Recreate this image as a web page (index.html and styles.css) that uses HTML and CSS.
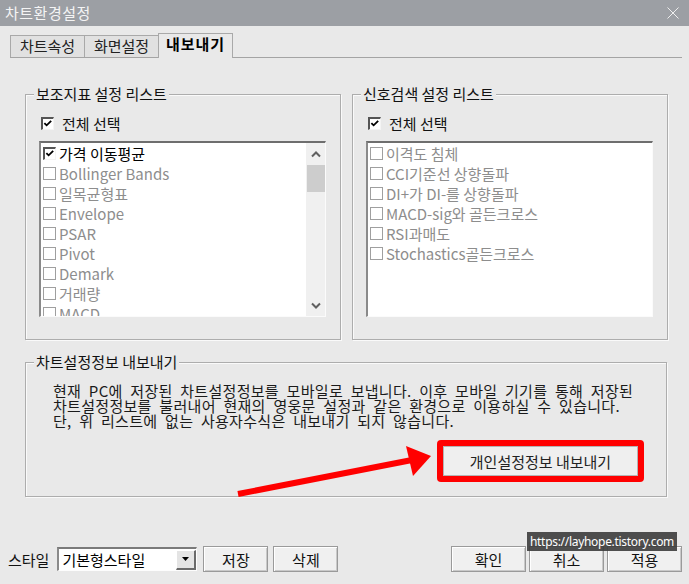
FILE: index.html
```html
<html>
<head>
    <title>차트환경설정</title>
    <link rel="stylesheet" href="styles.css">
</head>
<body>
    <div class="titlebar">
        <span class="title">차트환경설정</span>
        <svg class="close" width="12" height="12" viewBox="0 0 12 12">
            <path d="M0.5 0.5 L11.5 11.5 M11.5 0.5 L0.5 11.5" stroke="#eeeeee" stroke-width="1" fill="none"/>
        </svg>
    </div>

    <div class="tabs">
        <div class="tab">차트속성</div>
        <div class="tab">화면설정</div>
        <div class="tab active">내보내기</div>
    </div>

    <div class="content">
        <div class="lists">
            <div class="group">
                <div class="group-title">보조지표 설정 리스트</div>
                <div class="checkall">
                    <span class="cb checked">
                        <svg width="11" height="11" viewBox="0 0 11 11"><path d="M1.5 5 L4 7.5 L9 2.5" stroke="#000" stroke-width="2" fill="none"/></svg>
                    </span>
                    <span>전체 선택</span>
                </div>
                <div class="list">
                    <div class="items">
                        <div class="item on">
                            <span class="cb checked">
                                <svg width="11" height="11" viewBox="0 0 11 11"><path d="M1.5 5 L4 7.5 L9 2.5" stroke="#000" stroke-width="2" fill="none"/></svg>
                            </span>가격 이동평균
                        </div>
                        <div class="item"><span class="cb"></span>Bollinger Bands</div>
                        <div class="item"><span class="cb"></span>일목균형표</div>
                        <div class="item"><span class="cb"></span>Envelope</div>
                        <div class="item"><span class="cb"></span>PSAR</div>
                        <div class="item"><span class="cb"></span>Pivot</div>
                        <div class="item"><span class="cb"></span>Demark</div>
                        <div class="item"><span class="cb"></span>거래량</div>
                        <div class="item"><span class="cb"></span>MACD</div>
                    </div>
                    <div class="scroll">
                        <div class="arrow">
                            <svg width="10" height="7" viewBox="0 0 10 7"><path d="M1 5.5 L5 1.5 L9 5.5" stroke="#606060" stroke-width="2" fill="none"/></svg>
                        </div>
                        <div class="thumb"></div>
                        <div class="track"></div>
                        <div class="arrow">
                            <svg width="10" height="7" viewBox="0 0 10 7"><path d="M1 1.5 L5 5.5 L9 1.5" stroke="#606060" stroke-width="2" fill="none"/></svg>
                        </div>
                    </div>
                </div>
            </div>

            <div class="group">
                <div class="group-title">신호검색 설정 리스트</div>
                <div class="checkall">
                    <span class="cb checked">
                        <svg width="11" height="11" viewBox="0 0 11 11"><path d="M1.5 5 L4 7.5 L9 2.5" stroke="#000" stroke-width="2" fill="none"/></svg>
                    </span>
                    <span>전체 선택</span>
                </div>
                <div class="list">
                    <div class="items">
                        <div class="item"><span class="cb"></span>이격도 침체</div>
                        <div class="item"><span class="cb"></span>CCI기준선 상향돌파</div>
                        <div class="item"><span class="cb"></span>DI+가 DI-를 상향돌파</div>
                        <div class="item"><span class="cb"></span>MACD-sig와 골든크로스</div>
                        <div class="item"><span class="cb"></span>RSI과매도</div>
                        <div class="item"><span class="cb"></span>Stochastics골든크로스</div>
                    </div>
                </div>
            </div>
        </div>

        <div class="group export">
            <div class="group-title">차트설정정보 내보내기</div>
            <p class="desc">
                현재 PC에 저장된 차트설정정보를 모바일로 보냅니다. 이후 모바일 기기를 통해 저장된<br>
                차트설정정보를 불러내어 현재의 영웅문 설정과 같은 환경으로 이용하실 수 있습니다.<br>
                단, 위 리스트에 없는 사용자수식은 내보내기 되지 않습니다.
            </p>
            <div class="export-row">
                <span class="highlight">
                    <button type="button" class="export-button">개인설정정보 내보내기</button>
                </span>
            </div>
        </div>
    </div>

    <div class="bottombar">
        <div class="bar-left">
            <span class="label">스타일</span>
            <div class="combo">
                <span class="combo-text">기본형스타일</span>
                <span class="combo-btn">
                    <svg width="7" height="4" viewBox="0 0 7 4"><path d="M0 0 H7 L3.5 4 Z" fill="#000"/></svg>
                </span>
            </div>
            <button type="button" class="btn small">저장</button>
            <button type="button" class="btn small">삭제</button>
        </div>
        <div class="bar-right">
            <button type="button" class="btn">확인</button>
            <button type="button" class="btn">취소</button>
            <button type="button" class="btn">적용</button>
        </div>
    </div>

    <!-- annotation drawn over the dialog -->
    <svg class="pointer" width="689" height="584" viewBox="0 0 689 584">
        <line x1="238" y1="494" x2="412" y2="460" stroke="#ff0000" stroke-width="6"/>
        <polygon points="431,456 406,446 413,476" fill="#ff0000"/>
    </svg>
    <div class="watermark">https://layhope.tistory.com</div>
</body>
</html>
```

FILE: styles.css
```css
body {
    margin: 0;
    width: 689px;
    height: 584px;
    position: relative;
    overflow: hidden;
    background: #e9e9e9;
    font-family: "Noto Sans CJK KR", "Liberation Sans", sans-serif;
    font-size: 15px;
    color: #111;
}
.titlebar {
    height: 26px;
    background: #9c9fa4;
    display: flex;
    align-items: center;
    justify-content: space-between;
    padding: 0 10px 0 5px;
}
.title {
    color: #f4f4f4;
    line-height: 26px;
    letter-spacing: 0.5px;
}
.tabs {
    display: flex;
    align-items: flex-end;
    height: 24px;
    margin: 7px 7px 0 10px;
    border-bottom: 1px solid #a4a4a4;
}
.tab {
    width: 75px;
    height: 22px;
    box-sizing: border-box;
    border: 1px solid #a9a9a9;
    border-bottom: none;
    background: #e1e1e1;
    text-align: center;
    line-height: 20px;
    color: #222;
}
.tab + .tab {
    margin-left: -1px;
}
.tab.active {
    height: 25px;
    margin-bottom: -1px;
    background: #e9e9e9;
    font-weight: bold;
    letter-spacing: 1px;
    color: #000;
}
.content {
    padding: 0 22px 0 25px;
}
.lists {
    display: grid;
    grid-template-columns: 316px 316px;
    column-gap: 11px;
    margin-top: 36px;
}
.group {
    border: 1px solid #adadad;
    box-shadow: inset 1px 1px 0 #fafafa, 1px 1px 0 #fafafa;
    padding: 0 14px 22px 13px;
}
.group-title {
    width: max-content;
    margin: -9px 0 0 -5px;
    padding: 0 2px;
    background: #e9e9e9;
    line-height: 16px;
    color: #111;
}
.checkall {
    display: flex;
    align-items: center;
    gap: 8px;
    height: 16px;
    margin: 13px 0 0 2px;
}
.cb {
    width: 13px;
    height: 13px;
    box-sizing: border-box;
    flex-shrink: 0;
    background: #fff;
    border: 1px solid #9f9f9f;
    display: flex;
    align-items: center;
    justify-content: center;
}
.cb.checked {
    border-width: 2px 1px 1px 2px;
    border-color: #555 #f4f4f4 #f4f4f4 #555;
}
.list {
    margin-top: 10px;
    height: 176px;
    box-sizing: border-box;
    border-style: solid;
    border-width: 2px 1px 1px 2px;
    border-color: #6e6e6e #fbfbfb #fbfbfb #8a8a8a;
    background: #fff;
    display: flex;
    overflow: hidden;
}
.items {
    flex: 1;
    overflow: hidden;
}
.item {
    height: 20px;
    display: flex;
    align-items: center;
    gap: 3px;
    padding-left: 2px;
    white-space: nowrap;
    color: #8d8d8d;
}
.item.on {
    color: #000;
}
.scroll {
    width: 19px;
    background: #f0f0f0;
    display: flex;
    flex-direction: column;
    align-items: center;
}
.arrow {
    height: 22px;
    display: flex;
    align-items: center;
    justify-content: center;
}
.thumb {
    width: 18px;
    height: 27px;
    background: #cdcdcd;
}
.track {
    flex: 1;
}
.export {
    margin-top: 22px;
    padding: 0 22px 14px 13px;
}
.desc {
    margin: 13px 0 0 14px;
    font-size: 15px;
    line-height: 15px;
    letter-spacing: 0.3px;
    word-spacing: 4px;
    white-space: nowrap;
    color: #1a1a1a;
}
.export-row {
    display: flex;
    justify-content: flex-end;
    margin-top: 12px;
}
.highlight {
    display: inline-block;
    background: #ff0000;
    padding: 6px;
    border-radius: 4px;
}
.export-button {
    display: block;
    width: 195px;
    height: 30px;
    margin: 0;
    background: #efefef;
    border: 1px solid #b4b4b4;
    font-family: "Noto Sans CJK KR", sans-serif;
    font-size: 15px;
    color: #222;
}
.bottombar {
    display: flex;
    justify-content: space-between;
    align-items: center;
    margin: 49px 7px 0 8px;
}
.bar-left, .bar-right {
    display: flex;
    align-items: center;
}
.label {
    margin-right: 8px;
}
.combo {
    width: 140px;
    height: 24px;
    box-sizing: border-box;
    display: flex;
    align-items: center;
    justify-content: space-between;
    background: #fff;
    border-style: solid;
    border-width: 2px 1px 1px 2px;
    border-color: #7a7a7a #fdfdfd #fdfdfd #8a8a8a;
    margin-right: 6px;
}
.combo-text {
    padding-left: 3px;
    color: #000;
}
.combo-btn {
    width: 20px;
    height: 20px;
    box-sizing: border-box;
    display: flex;
    align-items: center;
    justify-content: center;
    background: #e4e4e4;
    border-style: solid;
    border-width: 1px 2px 2px 1px;
    border-color: #fff #6a6a6a #6a6a6a #fff;
}
.btn {
    width: 75px;
    height: 26px;
    box-sizing: border-box;
    margin: 0 0 0 3px;
    padding: 0;
    background: #f0f0f0;
    border: 1px solid #9a9a9a;
    box-shadow: inset 1px 1px 0 #fff, inset -1px -1px 0 #c9c9c9;
    font-family: "Noto Sans CJK KR", sans-serif;
    font-size: 15px;
    color: #111;
}
.btn.small {
    width: 65px;
    margin: 0 5px 0 0;
}
.pointer {
    position: absolute;
    left: 0;
    top: 0;
    pointer-events: none;
}
.watermark {
    position: absolute;
    left: 527px;
    top: 532px;
    width: 150px;
    height: 19px;
    background: rgba(60, 60, 60, 0.9);
    color: #fff;
    font-family: "Noto Sans", sans-serif;
    font-size: 12px;
    letter-spacing: -0.3px;
    line-height: 19px;
    text-align: center;
    white-space: nowrap;
    overflow: hidden;
}
```
